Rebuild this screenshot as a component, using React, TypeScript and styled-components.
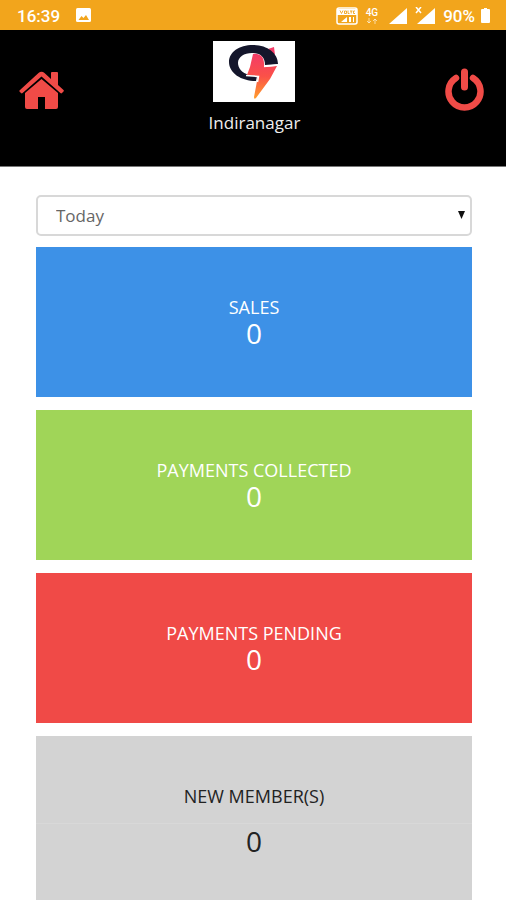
import React from 'react';
import styled, { createGlobalStyle } from 'styled-components';

const GlobalStyle = createGlobalStyle`
  *, *::before, *::after { box-sizing: border-box; }
  body { margin: 0; background: #fff; font-family: "Open Sans", "Noto Sans", sans-serif; }
`;

const Page = styled.div`
  display: flex;
  flex-direction: column;
  min-height: 100vh;
`;

const StatusBar = styled.div`
  display: flex;
  align-items: center;
  justify-content: space-between;
  height: 30px;
  padding: 1px 16px 0 17px;
  background: #f2a51c;
  color: #fff;
  font: 500 17px/20px Roboto, sans-serif;
`;

const StatusGroup = styled.div<{ $gap: number }>`
  display: flex;
  align-items: center;
  gap: ${(p) => p.$gap}px;
`;

const Glyph = styled.svg`
  display: block;
  flex: none;
`;

const Network = styled.div`
  display: flex;
  flex-direction: column;
  align-items: center;
  margin-right: 3px;
  font-size: 10px;
  line-height: 10px;
`;

const Header = styled.header`
  display: flex;
  justify-content: space-between;
  align-items: flex-start;
  height: 137px;
  padding: 11px 22px 0 19px;
  background: #000;
  border-bottom: 1px solid #777;
`;

const IconButton = styled.button<{ $top: number }>`
  margin: ${(p) => p.$top}px 0 0;
  padding: 0;
  border: 0;
  background: none;
  color: #f04b47;
  cursor: pointer;
`;

const Brand = styled.div`
  display: flex;
  flex-direction: column;
  align-items: center;
  gap: 9px;
  color: #eee;
  font-size: 17px;
  line-height: 24px;
`;

const Main = styled.main`
  display: flex;
  flex: 1;
  flex-direction: column;
  gap: 13px;
  padding: 28px 34px 0 36px;
`;

const SelectWrap = styled.div`
  position: relative;
  height: 41px;
  margin-bottom: -2px;
`;

const Select = styled.select`
  width: 100%;
  height: 41px;
  padding: 0 30px 0 18px;
  border: 2px solid #d8d8d8;
  border-radius: 5px;
  appearance: none;
  background: #fff;
  color: #666;
  font: 17px/24px "Open Sans", sans-serif;
`;

const Arrow = styled.svg`
  position: absolute;
  top: 16px;
  right: 7px;
  pointer-events: none;
`;

const Card = styled.section<{ $color: string }>`
  height: 150px;
  padding-top: 48px;
  background: ${(p) => p.$color};
  color: #fff;
  text-align: center;
`;

const MemberCard = styled(Card)`
  flex: 1;
  height: auto;
  min-height: 164px;
  color: #222;
`;

const Title = styled.h2`
  margin: 0;
  font-size: 18px;
  font-weight: 400;
  line-height: 24px;
`;

const Value = styled.p`
  margin: 0;
  font-size: 28px;
  line-height: 28px;
`;

const MemberValue = styled(Value)`
  margin-top: 15px;
  padding-top: 3px;
  border-top: 1px solid #d8d8d8;
`;

const cards = [
  { title: 'SALES', value: 0, color: '#3d91e7' },
  { title: 'PAYMENTS COLLECTED', value: 0, color: '#a0d558' },
  { title: 'PAYMENTS PENDING', value: 0, color: '#f04a47' },
];

function VolteIcon() {
  return (
    <Glyph width="22" height="18" viewBox="0 0 22 18">
      <rect x="1" y="1" width="20" height="16" rx="2" fill="none" stroke="#fff" strokeWidth="1.5" />
      <path d="M1 2h20v6H1z" fill="#fff" />
      <path d="M4 3.5l1.5 3L7 3.5M8.5 4h2v2.5h-2zM12 3.5v3h1.5M14 4h2.5M15.2 4v2.5M19 4h-1.5v2.5H19" fill="none" stroke="#f2a51c" strokeWidth="0.9" />
      <path d="M5 15l6-5v5zM13 10h2v5h-2zM17 10h1v5h-1z" fill="#fff" />
    </Glyph>
  );
}

function Logo() {
  return (
    <Glyph width="82" height="61" viewBox="0 0 82 61" role="img" aria-label="Company logo">
      <defs>
        <linearGradient id="bolt" x1="0" y1="0" x2="0" y2="1">
          <stop offset="0" stopColor="#f43b67" />
          <stop offset="0.5" stopColor="#fb5148" />
          <stop offset="1" stopColor="#ff9f2d" />
        </linearGradient>
      </defs>
      <path d="M0 0h82v61H0z" fill="#fff" />
      <path d="M55 8L61 6L62 14Z" fill="#f43b67" />
      <path d="M65 23C65 12 54 4 40 4C26 4 16 11 16 21C16 32 28 40 43 40L44 35L36 34C29 32 25 27 25 22C25 16 31 12 39 12C47 12 52 16 52 24Z" fill="#14162b" />
      <path d="M40 13C47 12 52 16 51 26L64 25L57 38L43 57Q41 59 41 56L45 35L34 34L37 26Z" fill="url(#bolt)" />
      <path d="M33 34.5L45.5 35.5L44.500 41" fill="none" stroke="#fff" strokeWidth="1.5" />
      <path d="M51 25.500L65 24" stroke="#fff" strokeWidth="1.5" />
    </Glyph>
  );
}

export default function App() {
  return (
    <>
      <GlobalStyle />
      <Page>
        <StatusBar>
          <StatusGroup $gap={16}>
            <span>16:39</span>
            <Glyph width="15" height="15" viewBox="0 0 15 15">
              <rect width="15" height="14" rx="1.5" fill="#fff" />
              <path d="M2.5 12l3-4 2 2 2.5-3 3 5z" fill="#f2a51c" />
            </Glyph>
          </StatusGroup>
          <StatusGroup $gap={8}>
            <VolteIcon />
            <Network>
              <span>4G</span>
              <Glyph width="12" height="6" viewBox="0 0 12 6">
                <path d="M3 0v5M1 3l2 2 2-2M9 6V1M7 3l2-2 2 2" fill="none" stroke="#fff" opacity="0.6" />
              </Glyph>
            </Network>
            <Glyph width="18" height="16" viewBox="0 0 18 16"><path d="M18 0v16H0z" fill="#fff" /></Glyph>
            <Glyph width="20" height="18" viewBox="0 0 20 18">
              <path d="M20 1v16H2z" fill="#fff" />
              <path d="M1 0l5 6M6 0L1 6" stroke="#fff" strokeWidth="1.5" />
            </Glyph>
            <StatusGroup $gap={6}>
              <span>90%</span>
              <Glyph width="9" height="15" viewBox="0 0 9 15"><path d="M3 0h3v1h2q1 0 1 1v12q0 1-1 1H1q-1 0-1-1V2q0-1 1-1h2z" fill="#fff" /></Glyph>
            </StatusGroup>
          </StatusGroup>
        </StatusBar>
        <Header>
          <IconButton $top={30} type="button" aria-label="Home">
            <Glyph width="45" height="38" viewBox="0 0 45 38" fill="currentColor">
              <path d="M1 19L19.5 2Q22.5-.5 25.5 2L32 8V2q0-1 1-1h5q1 0 1 1v12l5.5 5q.8.8 0 1.5L43 22q-.8.8-1.6 0L22.5 5.5 3.6 22Q2.8 22.8 2 22L.5 20.5Q0 19.8 1 19z" />
              <path d="M22.5 8L39 22v14q0 2-2 2H26V26h-7v12H8q-2 0-2-2V22z" />
            </Glyph>
          </IconButton>
          <Brand>
            <Logo />
            <span>Indiranagar</span>
          </Brand>
          <IconButton $top={27} type="button" aria-label="Log out">
            <Glyph width="39" height="43" viewBox="0 0 39 43" fill="none" stroke="currentColor" strokeLinecap="round">
              <path d="M11 10A16 16 0 1 0 28 10" strokeWidth="6.5" />
              <path d="M19.5 4v15" strokeWidth="7" />
            </Glyph>
          </IconButton>
        </Header>
        <Main>
          <SelectWrap>
            <Select aria-label="Period" defaultValue="Today">
              <option>Today</option>
            </Select>
            <Arrow width="7" height="8" viewBox="0 0 7 8"><path d="M0 0h7L3.5 8z" fill="#111" /></Arrow>
          </SelectWrap>
          {cards.map((c) => (
            <Card key={c.title} $color={c.color}>
              <Title>{c.title}</Title>
              <Value>{c.value}</Value>
            </Card>
          ))}
          <MemberCard $color="#d3d3d3">
            <Title>NEW MEMBER(S)</Title>
            <MemberValue>0</MemberValue>
          </MemberCard>
        </Main>
      </Page>
    </>
  );
}
